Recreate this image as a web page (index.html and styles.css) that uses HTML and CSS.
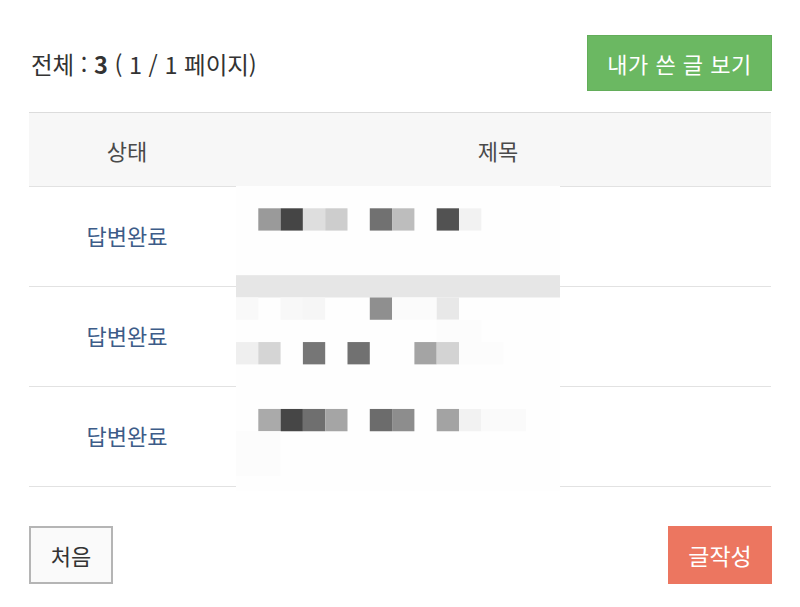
FILE: index.html
```html
<!DOCTYPE html>
<html lang="ko">
<head>
<meta charset="utf-8">
<link rel="stylesheet" href="styles.css">
</head>
<body>
<div class="page">
  <div class="top">
    <div class="total">전체 : <b>3</b> ( 1 / 1 페이지)</div>
    <button class="btn btn-green">내가 쓴 글 보기</button>
  </div>
  <div class="board">
    <div class="row head">
      <div class="c-status">상태</div>
      <div class="c-title">제목</div>
    </div>
    <div class="row">
      <div class="c-status done">답변완료</div>
      <div class="c-title"></div>
    </div>
    <div class="row">
      <div class="c-status done">답변완료</div>
      <div class="c-title"></div>
    </div>
    <div class="row">
      <div class="c-status done">답변완료</div>
      <div class="c-title"></div>
    </div>
    <svg class="mosaic" viewBox="0 0 14.53 13.68" preserveAspectRatio="none" aria-hidden="true">
      <rect x="0" y="0" width="14.53" height="13.68" fill="#fefefe"/>
      <rect x="1" y="1" width="1" height="1" fill="#9a9a9a"/>
      <rect x="2" y="1" width="1" height="1" fill="#454545"/>
      <rect x="3" y="1" width="1" height="1" fill="#dedede"/>
      <rect x="4" y="1" width="1" height="1" fill="#cdcdcd"/>
      <rect x="6" y="1" width="1" height="1" fill="#717171"/>
      <rect x="7" y="1" width="1" height="1" fill="#bdbdbd"/>
      <rect x="9" y="1" width="1" height="1" fill="#525252"/>
      <rect x="10" y="1" width="1" height="1" fill="#f2f2f2"/>
      <rect x="0" y="4" width="14.53" height="1" fill="#e6e6e6"/>
      <rect x="0" y="5" width="1" height="1" fill="#f9f9f9"/>
      <rect x="2" y="5" width="1" height="1" fill="#f8f8f8"/>
      <rect x="3" y="5" width="1" height="1" fill="#f6f6f6"/>
      <rect x="6" y="5" width="1" height="1" fill="#8f8f8f"/>
      <rect x="7" y="5" width="2" height="1" fill="#fbfbfb"/>
      <rect x="9" y="5" width="1" height="1" fill="#e8e8e8"/>
      <rect x="9" y="6" width="2" height="1" fill="#fcfcfc"/>
      <rect x="0" y="7" width="1" height="1" fill="#efefef"/>
      <rect x="1" y="7" width="1" height="1" fill="#d5d5d5"/>
      <rect x="3" y="7" width="1" height="1" fill="#767676"/>
      <rect x="5" y="7" width="1" height="1" fill="#717171"/>
      <rect x="8" y="7" width="1" height="1" fill="#a4a4a4"/>
      <rect x="9" y="7" width="1" height="1" fill="#d3d3d3"/>
      <rect x="10" y="7" width="2" height="1" fill="#fcfcfc"/>
      <rect x="1" y="10" width="1" height="1" fill="#aaaaaa"/>
      <rect x="2" y="10" width="1" height="1" fill="#464646"/>
      <rect x="3" y="10" width="1" height="1" fill="#6f6f6f"/>
      <rect x="4" y="10" width="1" height="1" fill="#a5a5a5"/>
      <rect x="6" y="10" width="1" height="1" fill="#6c6c6c"/>
      <rect x="7" y="10" width="1" height="1" fill="#8d8d8d"/>
      <rect x="9" y="10" width="1" height="1" fill="#a3a3a3"/>
      <rect x="10" y="10" width="1" height="1" fill="#f2f2f2"/>
      <rect x="11" y="10" width="2" height="1" fill="#fafafa"/>
      <rect x="0" y="11" width="2" height="2" fill="#fcfcfc"/>
    </svg>
  </div>
  <div class="bottom">
    <button class="btn btn-plain">처음</button>
    <button class="btn btn-red">글작성</button>
  </div>
</div>
</body>
</html>
```
FILE: styles.css
```css
* { box-sizing: border-box; }
html, body { margin: 0; padding: 0; background: #fff; }
body {
  font-family: "Noto Sans CJK KR", "Noto Sans", sans-serif;
  color: #333;
}
.page {
  padding: 35px 28px 0 29px;
}
.top {
  display: flex;
  justify-content: space-between;
  align-items: center;
  height: 56px;
}
.total {
  font-size: 23.5px;
  color: #333;
  padding-left: 2px;
  padding-top: 2px;
}
.total b { font-weight: 700; }
.btn {
  font-family: inherit;
  border: none;
  cursor: pointer;
  padding: 0;
}
.btn-green {
  width: 185px;
  height: 56px;
  background: #6bb862;
  color: #fff;
  font-size: 22px;
  letter-spacing: 0.5px;
  border: 1px solid #63ad5a;
}
.board {
  position: relative;
  margin-top: 21px;
  border-top: 1px solid #dcdcdc;
  margin-right: 1px;
}
.row {
  display: grid;
  grid-template-columns: 196px 1fr;
  height: 100px;
  border-bottom: 1px solid #e2e2e2;
  align-items: center;
  text-align: center;
}
.row.head {
  height: 74px;
  background: #f7f7f7;
  font-size: 22px;
  color: #4a4a4a;
  font-weight: 400;
}
.done {
  font-size: 22px;
  color: #3d5c88;
  padding-bottom: 4px;
}
.mosaic {
  position: absolute;
  left: 207px;
  top: 73px;
  width: 324px;
  height: 305px;
  display: block;
}
.bottom {
  display: flex;
  justify-content: space-between;
  align-items: center;
  margin-top: 39px;
}
.btn-plain {
  width: 84px;
  height: 58px;
  background: #fafafa;
  border: 2px solid #b5b5b5;
  color: #333;
  font-size: 22px;
}
.btn-red {
  width: 104px;
  height: 58px;
  background: #ec7660;
  color: #fff;
  font-size: 23px;
}
```
